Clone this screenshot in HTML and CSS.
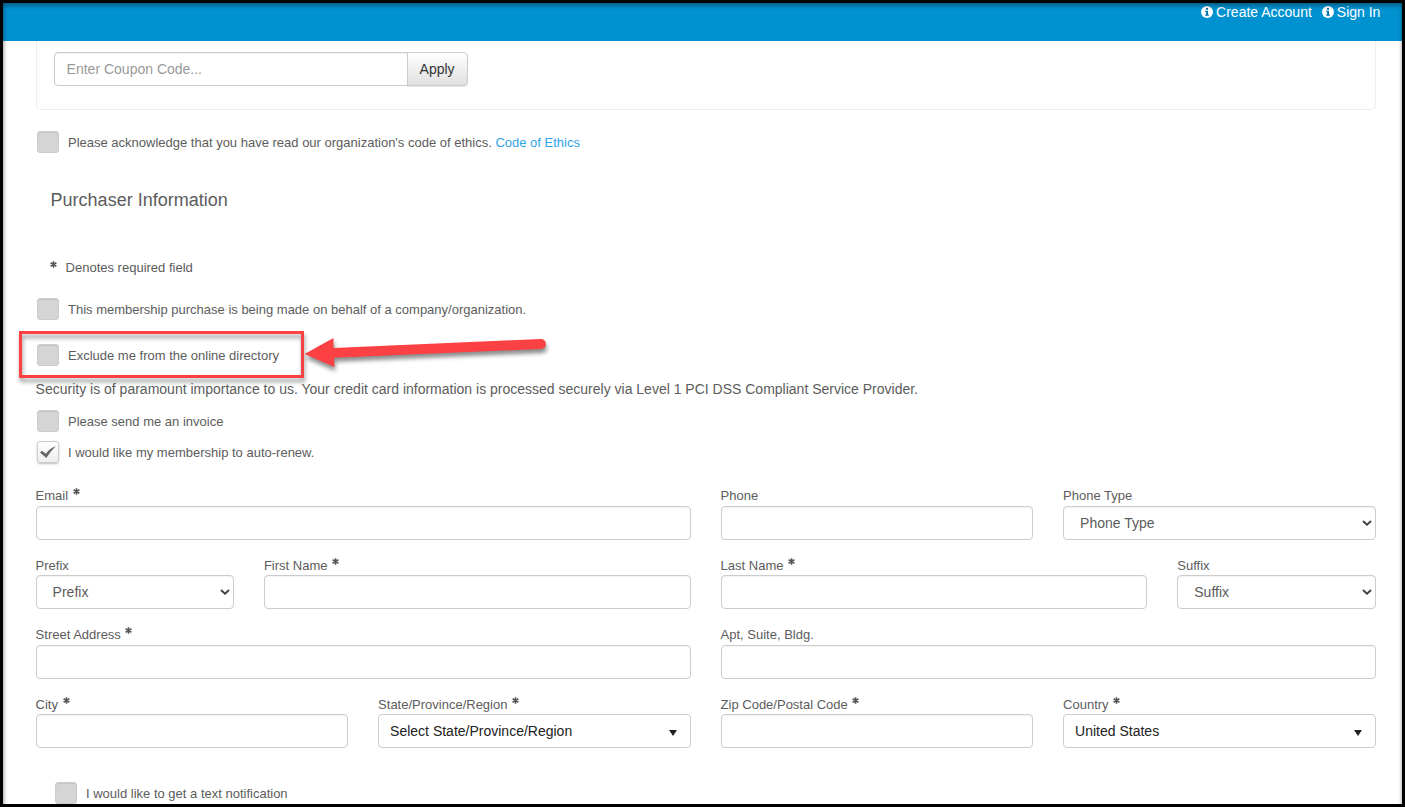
FILE: index.html
```html
<!DOCTYPE html>
<html lang="en">
<head>
  <meta charset="UTF-8">
  <title>Purchaser Information</title>
  <link rel="stylesheet" href="styles.css">
</head>
<body>

  <!-- shared icons -->
  <svg class="sprite" width="0" height="0">
    <symbol id="star" viewBox="0 0 7 7">
      <path d="M3.500 .2V6.800M.6 1.800L6.400 5.200M6.400 1.800L.6 5.200" stroke="#555" stroke-width="1.600" fill="none"/>
    </symbol>
    <symbol id="info" viewBox="0 0 12 12">
      <circle cx="6" cy="6" r="6" fill="#fff"/>
      <path d="M5 2h2v1.8H5zM4.2 4.8H7v3.7h.9v1.3H4.2V8.500h.9V6.100h-.9z" fill="#0073a8"/>
    </symbol>
    <symbol id="chevron" viewBox="0 0 10 6">
      <path d="M1 1L5 4.700L9 1" stroke="#444" stroke-width="2" fill="none"/>
    </symbol>
    <symbol id="caret" viewBox="0 0 8 6">
      <path d="M0 0H8L4 6z" fill="#222"/>
    </symbol>
  </svg>

  <div class="page">
    <header class="topbar">
      <a class="top-link"><svg class="info"><use href="#info"/></svg><span>Create Account</span></a>
      <a class="top-link"><svg class="info"><use href="#info"/></svg><span>Sign In</span></a>
    </header>

    <main class="content">
      <div class="coupon-panel">
        <input class="coupon-input" type="text" placeholder="Enter Coupon Code...">
        <button class="apply-btn">Apply</button>
      </div>

      <div class="check-row ethics">
        <span class="checkbox"></span>
        <span class="check-label">Please acknowledge that you have read our organization's code of ethics. <a class="link">Code of Ethics</a></span>
      </div>

      <h3 class="title">Purchaser Information</h3>

      <div class="required-note"><svg class="star"><use href="#star"/></svg><span>Denotes required field</span></div>

      <div class="check-row company">
        <span class="checkbox"></span>
        <span class="check-label">This membership purchase is being made on behalf of a company/organization.</span>
      </div>

      <div class="check-row exclude">
        <span class="checkbox"></span>
        <span class="check-label">Exclude me from the online directory</span>
        <div class="highlight"></div>
        <svg class="arrow" width="250" height="44" viewBox="0 0 250 44">
          <path d="M.5 20L29.500 4V14L237 5A5 5 0 0 1 237 15L30 23.800L30.500 33z" fill="#fb4143"/>
        </svg>
      </div>

      <p class="security">Security is of paramount importance to us. Your credit card information is processed securely via Level 1 PCI DSS Compliant Service Provider.</p>

      <div class="check-row invoice">
        <span class="checkbox"></span>
        <span class="check-label">Please send me an invoice</span>
      </div>

      <div class="check-row renew">
        <span class="checkbox checked">
          <svg width="16" height="13" viewBox="0 0 16 13"><path d="M0 6.500L2 4.800L5.800 7.800Q9.500 2.500 15.800 0Q10.500 5.500 6.300 12z" fill="#666"/></svg>
        </span>
        <span class="check-label">I would like my membership to auto-renew.</span>
      </div>

      <div class="form-grid">
        <div class="field col-6">
          <label>Email <svg class="star"><use href="#star"/></svg></label>
          <input type="text">
        </div>
        <div class="field col-3">
          <label>Phone</label>
          <input type="text">
        </div>
        <div class="field col-3">
          <label>Phone Type</label>
          <div class="select">Phone Type<svg class="chevron"><use href="#chevron"/></svg></div>
        </div>

        <div class="field col-2">
          <label>Prefix</label>
          <div class="select">Prefix<svg class="chevron"><use href="#chevron"/></svg></div>
        </div>
        <div class="field col-4">
          <label>First Name <svg class="star"><use href="#star"/></svg></label>
          <input type="text">
        </div>
        <div class="field col-4">
          <label>Last Name <svg class="star"><use href="#star"/></svg></label>
          <input type="text">
        </div>
        <div class="field col-2">
          <label>Suffix</label>
          <div class="select">Suffix<svg class="chevron"><use href="#chevron"/></svg></div>
        </div>

        <div class="field col-6">
          <label>Street Address <svg class="star"><use href="#star"/></svg></label>
          <input type="text">
        </div>
        <div class="field col-6">
          <label>Apt, Suite, Bldg.</label>
          <input type="text">
        </div>

        <div class="field col-3">
          <label>City <svg class="star"><use href="#star"/></svg></label>
          <input type="text">
        </div>
        <div class="field col-3">
          <label>State/Province/Region <svg class="star"><use href="#star"/></svg></label>
          <div class="select combo">Select State/Province/Region<svg class="caret"><use href="#caret"/></svg></div>
        </div>
        <div class="field col-3">
          <label>Zip Code/Postal Code <svg class="star"><use href="#star"/></svg></label>
          <input type="text">
        </div>
        <div class="field col-3">
          <label>Country <svg class="star"><use href="#star"/></svg></label>
          <div class="select combo">United States<svg class="caret"><use href="#caret"/></svg></div>
        </div>
      </div>

      <div class="check-row notify">
        <span class="checkbox"></span>
        <span class="check-label">I would like to get a text notification</span>
      </div>
    </main>
    <div class="edge-shadow"></div>
  </div>

</body>
</html>
```

FILE: styles.css
```css
* {
  box-sizing: border-box;
}

body {
  margin: 0;
  background: #000;
  color: #5c5c5c;
  font-family: "Liberation Sans", Arial, sans-serif;
  font-size: 13px;
}

.sprite {
  position: absolute;
}

.page {
  position: relative;
  height: 807px;
  border: 3px solid #000;
  background: #fff;
  overflow: hidden;
}

/* dark soft edge just inside the frame */
.edge-shadow {
  position: absolute;
  inset: 0 0 -12px 0;
  box-shadow: inset 0 3px 4px rgba(0, 0, 0, 0.3), inset 1px 0 4px rgba(0, 0, 0, 0.2);
  pointer-events: none;
}

.topbar {
  display: flex;
  justify-content: flex-end;
  gap: 10px;
  height: 38px;
  padding-right: 21.6px;
  background: #0092d0;
}

.top-link {
  display: flex;
  align-items: center;
  gap: 3px;
  height: 17px;
  color: #fff;
  font-size: 14px;
}

.info {
  width: 12px;
  height: 12px;
}

.content {
  padding: 0 26.4px 0 32.6px;
}

.coupon-panel {
  display: flex;
  height: 69px;
  padding: 11px 17px 0;
  border: 1px solid #eee;
  border-top: none;
  border-radius: 0 0 5px 5px;
}

input {
  display: block;
  width: 100%;
  height: 34px;
  padding: 0 12px;
  border: 1px solid #ccc;
  border-radius: 4px;
  background: #fff;
  box-shadow: inset 0 1px 1px rgba(0, 0, 0, 0.05);
  font-family: inherit;
  font-size: 14px;
}

.coupon-input {
  width: 354px;
  border-radius: 4px 0 0 4px;
}

.coupon-input::placeholder {
  color: #999;
}

.apply-btn {
  width: 61px;
  height: 34px;
  margin-left: -1px;
  padding: 0;
  border: 1px solid #ccc;
  border-radius: 0 4px 4px 0;
  background: linear-gradient(#fff, #e0e0e0);
  box-shadow: 0 1px 1px rgba(0, 0, 0, 0.1);
  color: #333;
  font-family: inherit;
  font-size: 14px;
}

.check-row {
  position: relative;
  display: flex;
  align-items: center;
  gap: 9.4px;
  height: 22px;
  padding-left: 1px;
}

.checkbox {
  display: flex;
  align-items: center;
  justify-content: center;
  width: 22px;
  height: 22px;
  border: 1px solid #ccc;
  border-radius: 3px;
  background: #d5d5d5;
  box-shadow: inset 0 1px 1px rgba(0, 0, 0, 0.08);
}

.checkbox.checked {
  background: linear-gradient(#fff, #eee);
  box-shadow: 0 1px 2px rgba(0, 0, 0, 0.25);
}

.check-label {
  padding-top: 2px;
  line-height: 20px;
}

.link {
  color: #2fa4e7;
}

.ethics {
  margin-top: 21px;
}

.title {
  margin: 36px 0 0 15px;
  font-size: 18px;
  font-weight: normal;
  line-height: 22px;
}

.star {
  width: 7px;
  height: 7px;
}

.required-note {
  display: flex;
  align-items: center;
  gap: 8.6px;
  height: 20px;
  margin: 46px 0 0 14.4px;
}

.required-note .star {
  margin-bottom: 6px;
}

.company {
  margin-top: 21px;
}

.exclude {
  margin-top: 24px;
}

/* callout around the directory option */
.highlight {
  position: absolute;
  left: -17px;
  top: -13px;
  width: 285px;
  height: 47px;
  border: 3px solid #fb4143;
  filter: drop-shadow(1px 4px 2px rgba(0, 0, 0, 0.4));
}

.arrow {
  position: absolute;
  left: 268px;
  top: -10px;
  filter: drop-shadow(1px 4px 2px rgba(0, 0, 0, 0.45));
}

.security {
  margin: 13px 0 0;
  font-size: 14px;
  line-height: 20px;
}

.invoice {
  margin-top: 11px;
}

.renew {
  margin-top: 9px;
}

.form-grid {
  display: grid;
  grid-template-columns: repeat(12, 1fr);
  column-gap: 30px;
  row-gap: 14.6px;
  margin-top: 21.6px;
}

.field label {
  display: block;
  height: 21px;
  padding-top: 0.4px;
  line-height: 21px;
}

.field .star {
  margin-left: 1px;
  vertical-align: 5px;
}

.col-2 { grid-column: span 2; }
.col-3 { grid-column: span 3; }
.col-4 { grid-column: span 4; }
.col-6 { grid-column: span 6; }

.select {
  display: flex;
  align-items: center;
  justify-content: space-between;
  height: 34px;
  padding: 0 3px 0 16px;
  border: 1px solid #ccc;
  border-radius: 4px;
  box-shadow: inset 0 1px 1px rgba(0, 0, 0, 0.05);
  font-size: 14px;
}

.combo {
  padding: 0 13px 0 11px;
  box-shadow: none;
  color: #222;
}

.chevron {
  width: 10px;
  height: 6px;
}

.caret {
  width: 8px;
  height: 6px;
  margin-top: 3px;
}

.notify {
  margin: 33.6px 0 0 18px;
}
```
